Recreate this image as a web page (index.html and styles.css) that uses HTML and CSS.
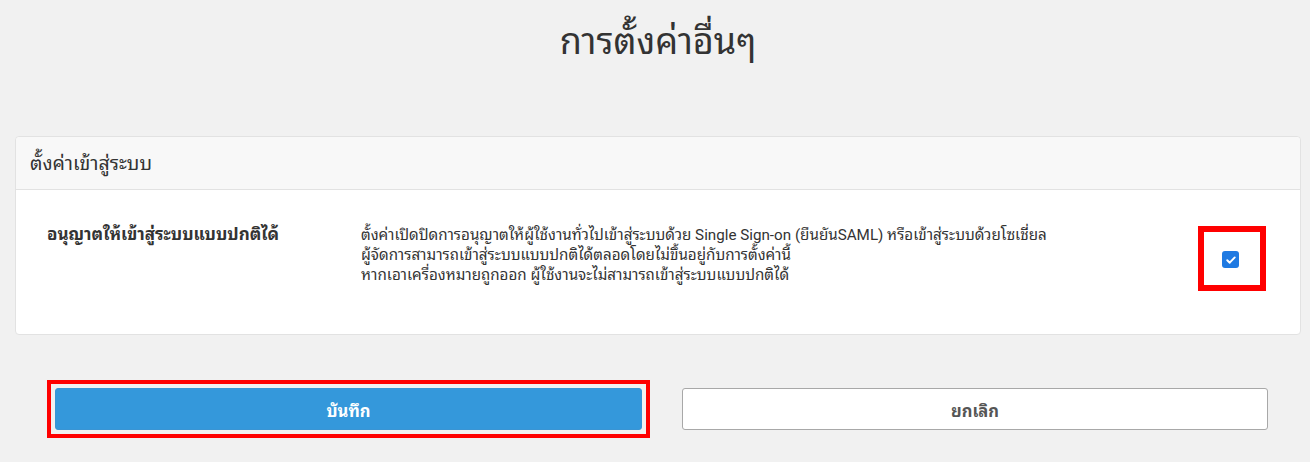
FILE: index.html
```html
<!DOCTYPE html>
<html lang="th">
<head>
<meta charset="utf-8">
<title>การตั้งค่าอื่นๆ</title>
<link rel="stylesheet" href="styles.css">
</head>
<body>
<div class="page">
  <h1 class="title">การตั้งค่าอื่นๆ</h1>
  <section class="card">
    <div class="card-header">ตั้งค่าเข้าสู่ระบบ</div>
    <div class="card-body">
      <div class="label">อนุญาตให้เข้าสู่ระบบแบบปกติได้</div>
      <div class="desc">
        <div>ตั้งค่าเปิดปิดการอนุญาตให้ผู้ใช้งานทั่วไปเข้าสู่ระบบด้วย Single Sign-on (ยืนยันSAML) หรือเข้าสู่ระบบด้วยโซเชี่ยล</div>
        <div>ผู้จัดการสามารถเข้าสู่ระบบแบบปกติได้ตลอดโดยไม่ขึ้นอยู่กับการตั้งค่านี้</div>
        <div>หากเอาเครื่องหมายถูกออก ผู้ใช้งานจะไม่สามารถเข้าสู่ระบบแบบปกติได้</div>
      </div>
      <div class="check-mark">
        <span class="checkbox"><svg viewBox="0 0 16 16" width="12" height="12"><path d="M3 8.4 6.3 11.6 13 4.6" fill="none" stroke="#fff" stroke-width="2.6" stroke-linecap="round" stroke-linejoin="round"/></svg></span>
      </div>
    </div>
  </section>
  <div class="actions">
    <div class="save-wrap">
      <button class="btn btn-primary" type="button">บันทึก</button>
    </div>
    <button class="btn btn-default" type="button">ยกเลิก</button>
  </div>
</div>
</body>
</html>
```
FILE: styles.css
```css
html, body {
  margin: 0;
  padding: 0;
}
body {
  background: #f1f1f1;
  color: #333;
  font-family: Roboto, "Noto Sans Thai Looped", "Noto Sans Thai", sans-serif;
  font-size: 15px;
  width: 1310px;
  height: 462px;
  overflow: hidden;
}
.page {
  padding: 0 9px 0 15px;
}
.title {
  margin: 0;
  padding-top: 16px;
  height: 136px;
  box-sizing: border-box;
  text-align: center;
  font-size: 36px;
  line-height: 52px;
  font-weight: 400;
  color: #333;
}
.card {
  background: #fff;
  border: 1px solid #e2e2e2;
  border-radius: 4px;
}
.card-header {
  height: 53px;
  box-sizing: border-box;
  display: flex;
  align-items: center;
  padding: 0 14px 3px;
  background: #f8f8f8;
  border-bottom: 1px solid #e2e2e2;
  border-radius: 4px 4px 0 0;
  font-size: 19.5px;
  color: #333;
}
.card-body {
  height: 144px;
  box-sizing: border-box;
  display: flex;
  align-items: flex-start;
  padding: 33px 34px 0 31px;
}
.label {
  width: 314px;
  flex: none;
  font-size: 17px;
  font-weight: 700;
  line-height: 22px;
}
.desc {
  flex: 1;
  margin-top: 2px;
  line-height: 20px;
  font-size: 15.2px;
}
.check-mark {
  flex: none;
  width: 56px;
  height: 53px;
  margin-top: 3px;
  border: 6px solid #f00;
  display: flex;
  align-items: center;
  justify-content: center;
}
.checkbox {
  width: 17px;
  height: 17px;
  border-radius: 3px;
  background: #1f7ae2;
  display: flex;
  align-items: center;
  justify-content: center;
  margin-left: -3px;
  margin-top: 2px;
}
.actions {
  display: flex;
  align-items: flex-start;
  gap: 32px;
  padding: 45px 0 0 32px;
}
.save-wrap {
  border: 4px solid #f00;
  padding: 4px;
}
.btn {
  display: block;
  width: 587px;
  height: 42px;
  border-radius: 3px;
  font-family: inherit;
  font-size: 16.5px;
  font-weight: 700;
  cursor: pointer;
}
.btn-primary {
  background: #3498db;
  color: #fff;
  border: 1px solid #3a95d4;
}
.btn-default {
  width: 586px;
  margin-top: 8px;
  background: #fff;
  color: #555;
  border: 1px solid #a8a8a8;
}
```
